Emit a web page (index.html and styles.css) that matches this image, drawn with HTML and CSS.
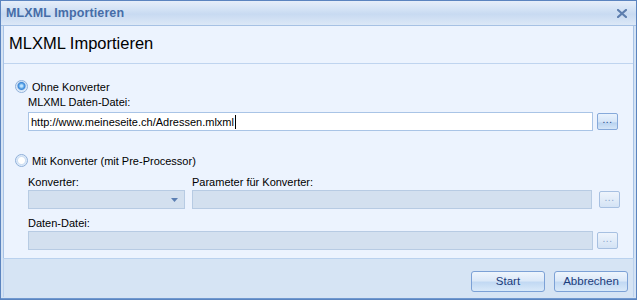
FILE: index.html
```html
<!DOCTYPE html>
<html>
<head>
<meta charset="utf-8">
<link rel="stylesheet" href="styles.css">
</head>
<body>
<div class="window">
  <div class="titlebar">
    <span class="title">MLXML Importieren</span>
    <svg class="close" width="10" height="9" viewBox="0 0 10 9"><path d="M1 1 L9 8 M9 1 L1 8" stroke="#5d7eae" stroke-width="2.2" stroke-linecap="square"/></svg>
  </div>
  <div class="frame">
    <div class="panel">
      <div class="header">MLXML Importieren</div>
      <div class="content">
        <div class="radio-row">
          <span class="radio checked"></span><span>Ohne Konverter</span>
        </div>
        <div class="group">
          <div class="label">MLXML Daten-Datei:</div>
          <div class="field-row">
            <div class="input active">http://www.meineseite.ch/Adressen.mlxml<span class="caret"></span></div>
            <div class="dots">...</div>
          </div>
        </div>
        <div class="radio-row second">
          <span class="radio"></span><span>Mit Konverter (mit Pre-Processor)</span>
        </div>
        <div class="group">
          <div class="grid2">
            <div class="col-combo">
              <div class="label">Konverter:</div>
              <div class="input disabled combo"><svg width="7" height="4" viewBox="0 0 7 4"><path d="M0 0 H7 L3.5 4 Z" fill="#5b7fb3"/></svg></div>
            </div>
            <div class="col-param">
              <div class="label">Parameter für Konverter:</div>
              <div class="input disabled short"></div>
            </div>
            <div class="dots disabled-dots">...</div>
          </div>
          <div class="label gap">Daten-Datei:</div>
          <div class="field-row">
            <div class="input disabled"></div>
            <div class="dots disabled-dots">...</div>
          </div>
        </div>
      </div>
    </div>
    <div class="footer">
      <div class="btn">Start</div>
      <div class="btn">Abbrechen</div>
    </div>
  </div>
</div>
</body>
</html>
```
FILE: styles.css
```css
html, body {
  margin: 0;
  padding: 0;
}
body {
  width: 637px;
  height: 300px;
  font-family: "Liberation Sans", Arial, sans-serif;
  font-size: 11px;
  color: #000;
}
.window {
  box-sizing: border-box;
  width: 637px;
  height: 300px;
  border: 1px solid #5b84bf;
  display: flex;
  flex-direction: column;
  background: #dce8f6;
}
.titlebar {
  height: 24px;
  flex: none;
  display: flex;
  align-items: center;
  justify-content: space-between;
  padding: 0 9px 0 5px;
  background: linear-gradient(#e6eef9 0%, #d3e2f5 35%, #c8daf1 55%, #dce8f7 100%);
  border-bottom: 1px solid #a6c1e4;
}
.title {
  font-weight: bold;
  font-size: 12.5px;
  color: #466da8;
  letter-spacing: 0.1px;
}
.close {
  margin-top: 1px;
}
.frame {
  flex: 1;
  display: flex;
  flex-direction: column;
  padding: 0 2px 1px 2px;
  border-bottom: 1px solid #6f98cf;
  background: #d5e3f4;
}
.panel {
  flex: none;
  height: 232px;
  box-sizing: border-box;
  border-left: 1px solid #a8c3e6;
  border-right: 1px solid #a8c3e6;
  background: #ecf3fe;
  display: flex;
  flex-direction: column;
}
.header {
  height: 38px;
  box-sizing: border-box;
  padding: 8px 0 0 5px;
  font-size: 16.5px;
  border-bottom: 1px solid #bfd4ef;
}
.content {
  padding: 16px 0 0 11px;
}
.radio-row {
  display: flex;
  align-items: center;
  height: 13px;
  gap: 4px;
}
.radio-row.second {
  margin-top: 23px;
}
.radio {
  box-sizing: border-box;
  width: 13px;
  height: 13px;
  border-radius: 50%;
  border: 1px solid #8fb0da;
  background: radial-gradient(circle, #ffffff 0 3px, #cddff4 4px, #eef4fc 6px);
}
.radio.checked {
  background: radial-gradient(circle at 50% 45%, #bfe3ff 0 1px, #5ca6e8 2.5px, #3f86d6 3.5px, #cfe1f5 4.5px, #eef4fc 6px);
}
.group {
  padding-left: 13px;
}
.label {
  height: 13px;
  line-height: 13px;
  margin-top: 3px;
  margin-bottom: 3px;
}
.label.gap {
  margin-top: 8px;
  margin-bottom: 1px;
}
.field-row {
  display: flex;
  align-items: center;
  gap: 4px;
}
.input {
  box-sizing: border-box;
  height: 19px;
  width: 565px;
  display: flex;
  align-items: center;
  padding-left: 2px;
}
.input.active {
  background: #fff;
  border: 1px solid #a9c4e6;
}
.caret {
  display: inline-block;
  width: 1px;
  height: 14px;
  background: #000;
  margin-left: 1px;
}
.input.disabled {
  background: #d3e0ef;
  border: 1px solid #b7cbe3;
}
.input.combo {
  width: 157px;
  justify-content: flex-end;
  padding-right: 6px;
}
.input.short {
  width: 400px;
}
.grid2 {
  display: flex;
  align-items: flex-end;
  gap: 7px;
}
.col-combo .label, .col-param .label {
  margin-top: 9px;
  margin-bottom: 1px;
}
.dots {
  box-sizing: border-box;
  width: 21px;
  height: 17px;
  border: 1px solid #86a9da;
  border-radius: 2px;
  background: linear-gradient(#e9f2fd 0%, #d6e6f8 50%, #b9d3f0 60%, #d5e6f8 100%);
  color: #1b3f80;
  font-size: 10px;
  line-height: 11px;
  text-align: center;
  letter-spacing: 0.5px;
  margin-left: 0;
  margin-bottom: 1px;
}
.dots.disabled-dots {
  border-color: #a7c0e1;
  background: linear-gradient(#eef4fc 0%, #e0ebf8 55%, #d4e3f5 100%);
  color: #8aa6cc;
}
.grid2 .dots {
  margin-left: 0;
}
.footer {
  flex: 1;
  border-top: 1px solid #b9d1ee;
  display: flex;
  justify-content: flex-end;
  align-items: flex-start;
  gap: 9px;
  padding: 12px 5px 0 0;
  background: #d6e4f4;
  border-left: 1px solid #bcd2ee;
  border-right: 1px solid #bcd2ee;
}
.btn {
  box-sizing: border-box;
  width: 74px;
  height: 21px;
  border: 1px solid #7ca1d6;
  border-radius: 3px;
  background: linear-gradient(#eef5fd 0%, #dce9f8 45%, #c2d9f3 55%, #d9e9f9 100%);
  color: #1a3c7c;
  font-size: 11.5px;
  text-align: center;
  line-height: 19px;
}
```
